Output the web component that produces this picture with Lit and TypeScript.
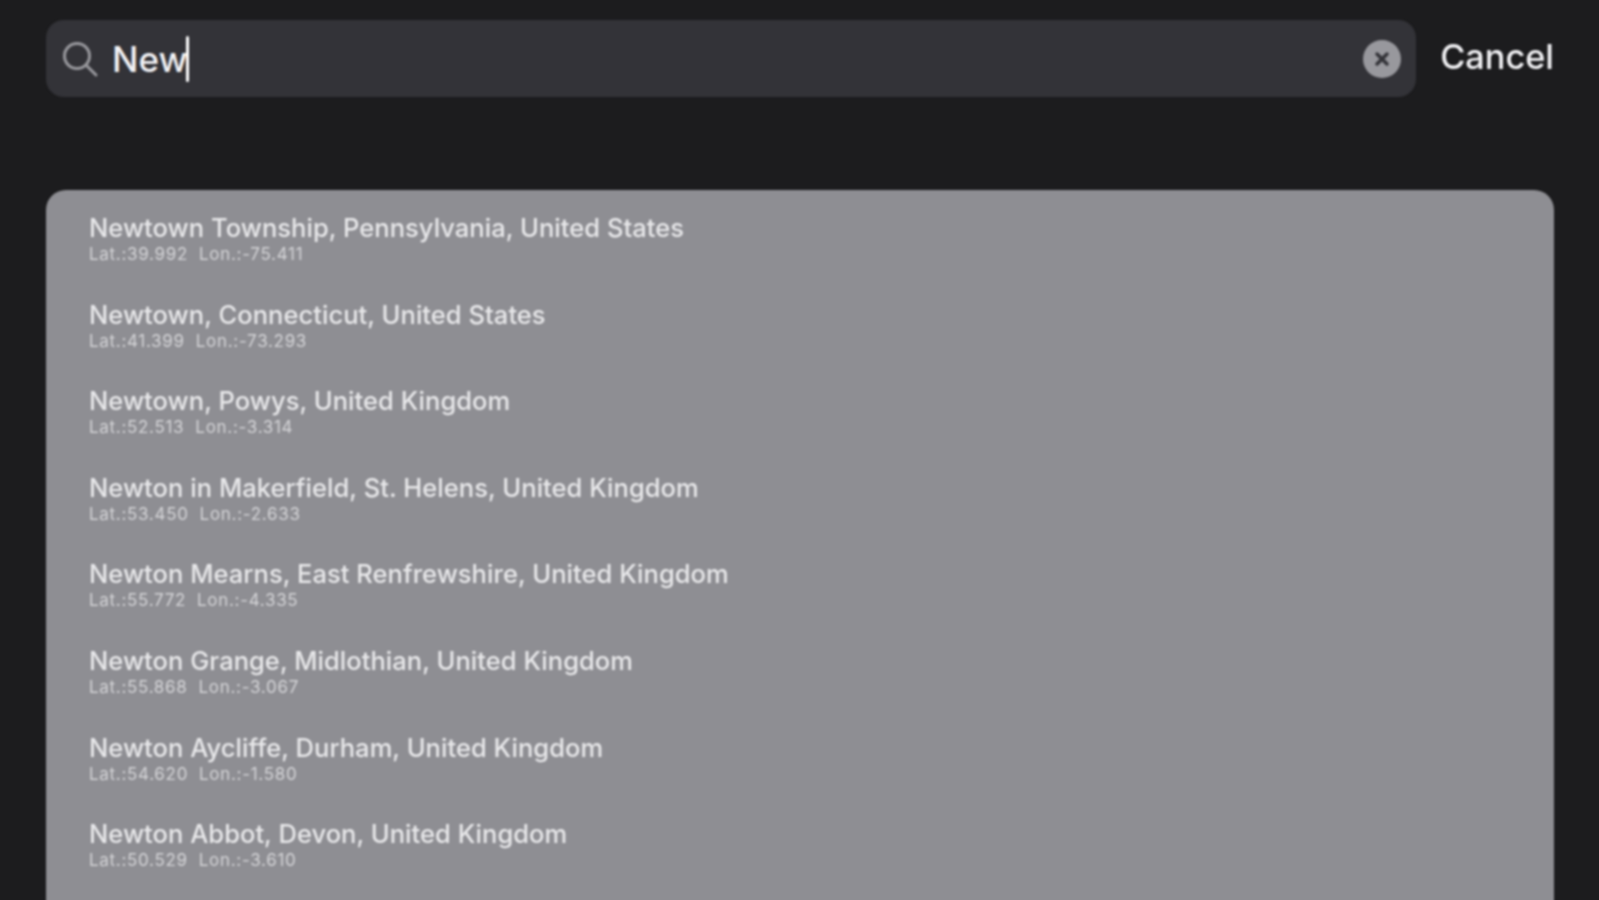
import { LitElement, html, css } from 'lit';
import { customElement } from 'lit/decorators.js';

const places = [
  { name: 'Newtown Township, Pennsylvania, United States', lat: '39.992', lon: '-75.411' },
  { name: 'Newtown, Connecticut, United States', lat: '41.399', lon: '-73.293' },
  { name: 'Newtown, Powys, United Kingdom', lat: '52.513', lon: '-3.314' },
  { name: 'Newton in Makerfield, St. Helens, United Kingdom', lat: '53.450', lon: '-2.633' },
  { name: 'Newton Mearns, East Renfrewshire, United Kingdom', lat: '55.772', lon: '-4.335' },
  { name: 'Newton Grange, Midlothian, United Kingdom', lat: '55.868', lon: '-3.067' },
  { name: 'Newton Aycliffe, Durham, United Kingdom', lat: '54.620', lon: '-1.580' },
  { name: 'Newton Abbot, Devon, United Kingdom', lat: '50.529', lon: '-3.610' },
];

@customElement('app-root')
export class AppRoot extends LitElement {
  static styles = css`
    :host {
      display: block;
      height: 900px;
      overflow: hidden;
      background: #1c1c1e;
      font-family: Inter, "Liberation Sans", sans-serif;
    }
    .page {
      display: flex;
      flex-direction: column;
      gap: 93px;
      padding: 20px 45px 0 46px;
      filter: blur(1.1px);
    }
    .top {
      display: flex;
      align-items: center;
      gap: 24px;
    }
    .search {
      flex: 1;
      height: 77px;
      box-sizing: border-box;
      display: flex;
      align-items: center;
      padding: 0 15px 0 15px;
      gap: 13px;
      background: #333338;
      border-radius: 18px;
    }
    .query {
      display: flex;
      align-items: center;
      flex: 1;
      font-size: 35px;
      font-weight: 500;
      color: #f2f2f5;
    }
    .caret {
      width: 3px;
      height: 46px;
      margin-left: -1px;
      background: #ffffff;
      border-radius: 2px;
    }
    .cancel {
      font-size: 34.3px;
      font-weight: 500;
      line-height: 36px;
      margin-bottom: 3px;
      color: #f2f2f5;
    }
    .list {
      display: flex;
      flex-direction: column;
      height: 720px;
      padding: 22px 43px 0;
      background: #8e8e93;
      border-radius: 20px 20px 0 0;
    }
    .row {
      height: 86.6px;
      flex: none;
    }
    .name {
      font-size: 25.5px;
      font-weight: 500;
      letter-spacing: 0.04px;
      line-height: 32px;
      color: #e8e8ea;
    }
    .coords {
      display: flex;
      gap: 11px;
      margin-top: 1px;
      font-size: 17px;
      letter-spacing: 0.7px;
      line-height: 19px;
      color: #d4d4d7;
    }
    svg {
      display: block;
      flex: none;
    }
  `;

  render() {
    return html`
      <div class="page">
        <div class="top">
          <div class="search">
            <svg width="38" height="38" viewBox="0 0 38 38" fill="none" stroke="#98989d" stroke-width="3" stroke-linecap="round">
              <circle cx="16" cy="16" r="12.5"></circle>
              <path d="M25.5 25.5 35 35"></path>
            </svg>
            <div class="query">New<span class="caret"></span></div>
            <svg width="38" height="38" viewBox="0 0 38 38">
              <circle cx="19" cy="19" r="19" fill="#98989d"></circle>
              <path d="M14 14 24 24M24 14 14 24" stroke="#333338" stroke-width="3.5" stroke-linecap="round"></path>
            </svg>
          </div>
          <div class="cancel">Cancel</div>
        </div>
        <div class="list">
          ${places.map(p => html`
            <div class="row">
              <div class="name">${p.name}</div>
              <div class="coords"><span>Lat.:${p.lat}</span><span>Lon.:${p.lon}</span></div>
            </div>
          `)}
        </div>
      </div>
    `;
  }
}
